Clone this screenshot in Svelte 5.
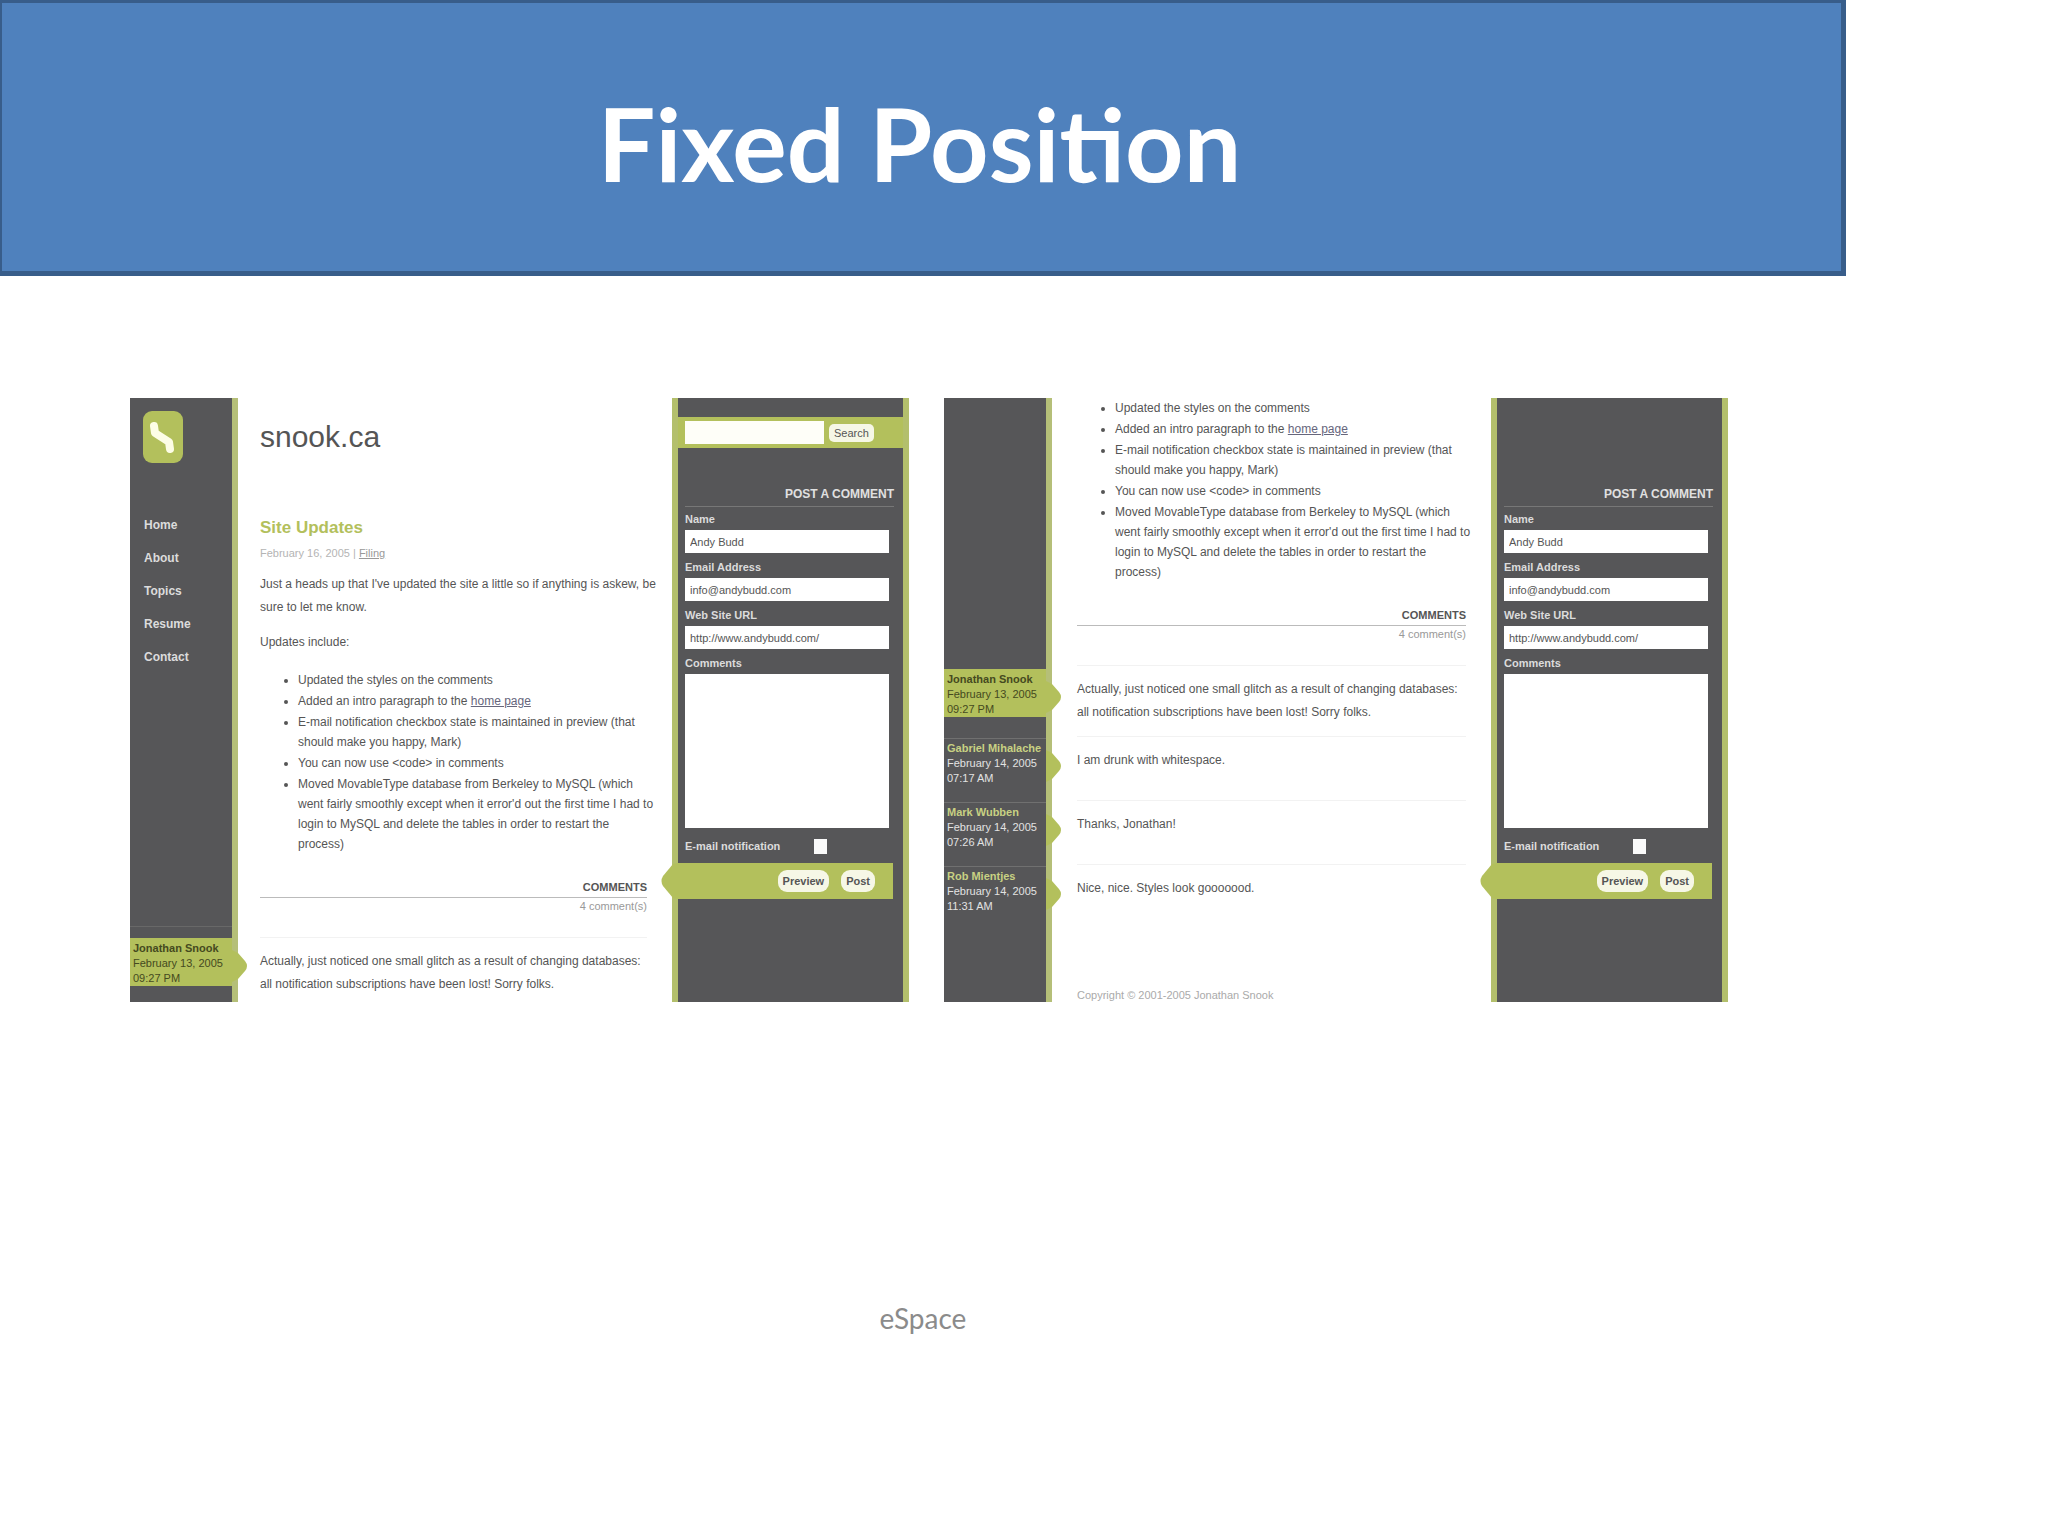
<script lang="ts">
  interface Comment {
    author: string;
    date: string;
    time: string;
    own?: boolean;
  }

  const nav = ['Home', 'About', 'Topics', 'Resume', 'Contact'];

  const owner: Comment = { author: 'Jonathan Snook', date: 'February 13, 2005', time: '09:27 PM', own: true };

  const comments: Comment[] = [
    owner,
    { author: 'Gabriel Mihalache', date: 'February 14, 2005', time: '07:17 AM' },
    { author: 'Mark Wubben', date: 'February 14, 2005', time: '07:26 AM' },
    { author: 'Rob Mientjes', date: 'February 14, 2005', time: '11:31 AM' }
  ];

  const replies = ['I am drunk with whitespace.', 'Thanks, Jonathan!', 'Nice, nice. Styles look gooooood.'];
</script>

{#snippet updates()}
  <ul class="updates">
    <li>Updated the styles on the comments</li>
    <li>Added an intro paragraph to the <a href="#home">home page</a></li>
    <li>E-mail notification checkbox state is maintained in preview (that<br />should make you happy, Mark)</li>
    <li>You can now use &lt;code&gt; in comments</li>
    <li>
      Moved MovableType database from Berkeley to MySQL (which<br />went fairly smoothly except when it
      error'd out the first time I had to<br />login to MySQL and delete the tables in order to restart
      the<br />process)
    </li>
  </ul>
  <h3>COMMENTS</h3>
  <p class="count">4 comment(s)</p>
  <p class="comment first">
    Actually, just noticed one small glitch as a result of changing databases:<br />all notification
    subscriptions have been lost! Sorry folks.
  </p>
{/snippet}

{#snippet meta(c: Comment)}
  <div class="meta" class:own={c.own}>
    <strong>{c.author}</strong>
    <span>{c.date}</span>
    <span>{c.time}</span>
    <svg class="bump" width="16" height="32" viewBox="0 0 16 32">
      <path d="M0 0 L6 3 L13 11 Q17 16 13 21 L6 29 L0 32 Z" fill="#b3c05c" />
    </svg>
  </div>
{/snippet}

{#snippet panel(id: string, search: boolean)}
  <aside class="panel">
    <div class="search" class:shown={search}>
      {#if search}
        <input type="text" aria-label="Search" />
        <button type="button">Search</button>
      {/if}
    </div>
    <h3 class="post">POST A COMMENT</h3>
    <form>
      <label for="{id}-name">Name</label>
      <input id="{id}-name" type="text" value="Andy Budd" />
      <label for="{id}-email">Email Address</label>
      <input id="{id}-email" type="text" value="info@andybudd.com" />
      <label for="{id}-url">Web Site URL</label>
      <input id="{id}-url" type="text" value="http://www.andybudd.com/" />
      <label for="{id}-text">Comments</label>
      <textarea id="{id}-text"></textarea>
      <div class="notify">
        <label for="{id}-notify">E-mail notification</label>
        <input id="{id}-notify" type="checkbox" />
      </div>
      <div class="actions">
        <svg class="pointer" width="18" height="36" viewBox="0 0 18 36">
          <path d="M18 0 L13 1 L3 13 Q0 18 3 23 L13 35 L18 36 Z" fill="#b3c05c" />
        </svg>
        <button type="button">Preview</button>
        <button type="button">Post</button>
      </div>
    </form>
  </aside>
{/snippet}

<div class="slide">
  <header><h1>Fixed Position</h1></header>

  <main>
    <section class="shot">
      <div class="side">
        <svg class="logo" width="40" height="52" viewBox="0 0 40 52">
          <rect width="40" height="52" rx="9" fill="#b3c05c" />
          <path d="M11 15 L12 22 L26 31 L27 38" fill="none" stroke="#fdfde6" stroke-width="8" stroke-linecap="round" stroke-linejoin="round" />
        </svg>
        <nav>
          {#each nav as item}
            <a href="#{item}">{item}</a>
          {/each}
        </nav>
        <div class="line"></div>
        {@render meta(owner)}
      </div>
      <article class="content">
        <div class="brand">snook.ca</div>
        <h2>Site Updates</h2>
        <p class="date">February 16, 2005 | <a href="#filing">Filing</a></p>
        <p class="intro">Just a heads up that I've updated the site a little so if anything is askew, be<br />sure to let me know.</p>
        <p class="intro last">Updates include:</p>
        {@render updates()}
      </article>
      {@render panel('top', true)}
    </section>

    <section class="shot">
      <div class="side scrolled">
        {#each comments as c}
          {@render meta(c)}
        {/each}
      </div>
      <article class="content">
        {@render updates()}
        {#each replies as reply}
          <p class="comment">{reply}</p>
        {/each}
        <p class="copyright">Copyright © 2001-2005 Jonathan Snook</p>
      </article>
      {@render panel('scrolled', false)}
    </section>
  </main>

  <footer>eSpace</footer>
</div>

<style>
  :global(body) {
    margin: 0;
    background: #fff;
  }

  .slide {
    min-height: 100vh;
    font-family: "Liberation Sans", Arial, sans-serif;
    color: #555;
  }

  h1, h2, h3, p, ul {
    margin: 0;
    padding: 0;
  }

  input, textarea, button {
    box-sizing: border-box;
    margin: 0;
    border: none;
    font-family: inherit;
    border-radius: 0;
  }

  header {
    box-sizing: border-box;
    height: 276px;
    margin-right: 202px;
    padding: 12px 4px 0 0;
    display: flex;
    align-items: center;
    justify-content: center;
    background: #4f81bd;
    border: solid #385d8a;
    border-width: 3px 5px 5px 2px;
  }

  h1 {
    font: bold 102px/120px Lato, sans-serif;
    color: #fff;
  }

  main {
    display: grid;
    grid-template-columns: 779fr 784fr;
    gap: 35px;
    margin: 122px 320px 0 130px;
  }

  .shot {
    display: grid;
    grid-template-columns: 108px minmax(0, 1fr) 237px;
    overflow: hidden;
    white-space: nowrap;
    font-size: 12px;
  }

  .side {
    background: #565658;
    border-right: 6px solid #b5bf78;
    display: flex;
    flex-direction: column;
  }

  .side.scrolled {
    padding-top: 271px;
  }

  .logo {
    margin: 13px 0 0 13px;
  }

  nav {
    display: flex;
    flex-direction: column;
    margin: 46px 0 0 14px;
  }

  nav a {
    color: #dcdcdc;
    font-weight: bold;
    line-height: 33px;
    text-decoration: none;
  }

  .line {
    margin-top: 252px;
    height: 11px;
    border-top: 1px solid #686868;
  }

  .meta {
    position: relative;
    display: flex;
    flex-direction: column;
    padding: 2px 0 0 3px;
    margin-bottom: 16px;
    border-top: 1px solid #707070;
    font-size: 11px;
    line-height: 15px;
    color: #e2e2e2;
  }

  .meta strong {
    color: #c8d183;
  }

  .meta.own {
    background: #b3c05c;
    border-color: #b3c05c;
    color: #454a20;
  }

  .meta.own strong {
    color: #454a20;
  }

  .meta.own + .meta {
    margin-top: 5px;
  }

  .bump {
    position: absolute;
    left: 100%;
    top: 11px;
  }

  .content {
    padding: 0 25px 0 22px;
    display: flex;
    flex-direction: column;
  }

  .scrolled + .content {
    padding-left: 25px;
  }

  .brand {
    margin-top: 19px;
    font-size: 30px;
    line-height: 40px;
  }

  h2 {
    margin-top: 59px;
    font-size: 17px;
    line-height: 24px;
    color: #b3c05c;
  }

  .date {
    margin-top: 5px;
    font-size: 11px;
    line-height: 16px;
    color: #b4b4b4;
  }

  .date a {
    color: #999;
  }

  .intro {
    margin-top: 12px;
    line-height: 23px;
  }

  .intro.last {
    margin-bottom: 16px;
  }

  .updates {
    padding-left: 38px;
    line-height: 20px;
  }

  .updates li + li {
    margin-top: 1px;
  }

  .updates a {
    color: #66667c;
  }

  .content h3 {
    margin-top: 23px;
    border-bottom: 1px solid #bbb;
    font-size: 11px;
    line-height: 20px;
    text-align: right;
  }

  .count {
    font-size: 11px;
    line-height: 16px;
    text-align: right;
    color: #999;
  }

  .comment {
    height: 51px;
    padding-top: 12px;
    border-top: 1px solid #f2f2f2;
    line-height: 23px;
  }

  .comment.first {
    height: 46px;
    margin-top: 23px;
    padding-bottom: 6px;
  }

  .comment.first + .comment {
    margin-top: 6px;
  }

  .copyright {
    margin-top: auto;
    font-size: 11px;
    line-height: 14px;
    color: #aaa;
  }

  .panel {
    background: #565658;
    border: solid #b3bf6c;
    border-width: 0 6px;
  }

  .search {
    margin-top: 19px;
    height: 31px;
    padding-left: 7px;
    display: flex;
    align-items: center;
    gap: 5px;
  }

  .shown {
    background: #b3c05c;
  }

  .search input {
    width: 139px;
    height: 23px;
    background: #fefef8;
  }

  button {
    height: 18px;
    padding: 0 5px;
    border-radius: 5px;
    background: #f6f7e6;
    color: #555;
    font-size: 11px;
    line-height: 18px;
  }

  .post {
    margin: 34px 9px 0 7px;
    border-bottom: 1px solid #777;
    font-size: 12px;
    line-height: 24px;
    text-align: right;
    color: #e0e0e0;
  }

  form {
    display: flex;
    flex-direction: column;
    margin-top: 4px;
    padding: 0 14px 0 7px;
  }

  label {
    font-size: 11px;
    font-weight: bold;
    line-height: 16px;
    color: #dcdcdc;
  }

  form > input {
    height: 23px;
    margin: 3px 0 6px;
    padding: 0 5px;
    background: #fff;
    color: #555;
    font-size: 11px;
  }

  textarea {
    height: 154px;
    margin-top: 3px;
    background: #fff;
    resize: none;
  }

  .notify {
    display: flex;
    align-items: center;
    justify-content: space-between;
    margin: 10px 62px 9px 0;
  }

  .notify input {
    appearance: none;
    width: 13px;
    height: 15px;
    background: #fafafa;
  }

  .actions {
    position: relative;
    display: flex;
    align-items: center;
    justify-content: flex-end;
    gap: 12px;
    height: 36px;
    margin: 0 -4px 0 -7px;
    padding-right: 18px;
    background: #b3c05c;
  }

  .actions button {
    height: 22px;
    border-radius: 9px;
    font-weight: bold;
  }

  .pointer {
    position: absolute;
    right: 100%;
    top: 0;
  }

  footer {
    margin: 298px 202px 0 0;
    font: 28px/36px Lato, sans-serif;
    color: #8b8b8b;
    text-align: center;
  }
</style>
